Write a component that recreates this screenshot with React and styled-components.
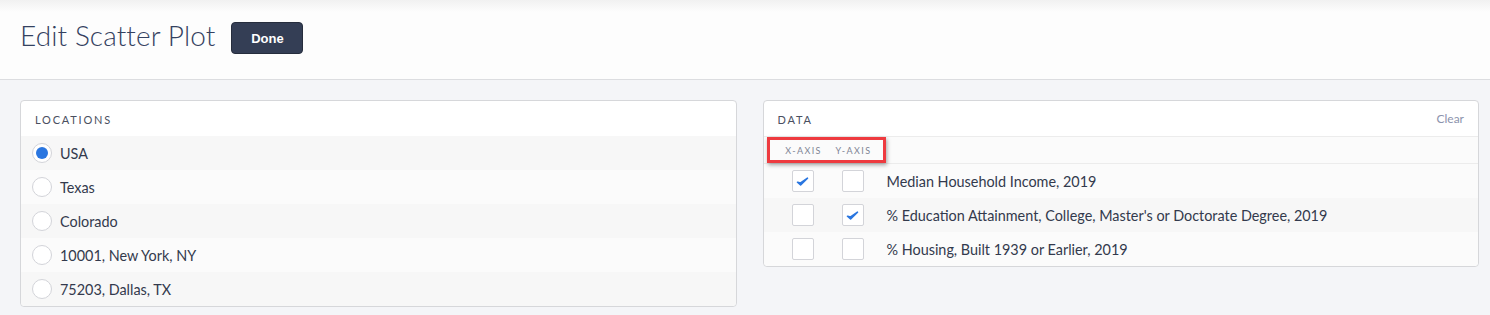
import React from "react";
import styled, { createGlobalStyle } from "styled-components";

const GlobalStyle = createGlobalStyle`
  html, body {
    margin: 0;
    padding: 0;
    background: #f4f5f8;
    font-family: Lato, "Noto Sans", sans-serif;
    color: #3a4256;
  }
`;

const Page = styled.div`
  width: 1490px;
  height: 315px;
  overflow: hidden;
`;

const Header = styled.header`
  height: 80px;
  box-sizing: border-box;
  border-bottom: 1px solid #dcdde0;
  background: linear-gradient(#f1f1f1 0px, #fdfdfd 12px, #fdfdfd 100%);
  display: flex;
  align-items: center;
  padding: 0 0 4px 20px;
  gap: 16px;
`;

const Title = styled.h1`
  margin: 0 0 5px 0;
  font-size: 28px;
  font-weight: 300;
  color: #344160;
  letter-spacing: 0.1px;
`;

const DoneButton = styled.button`
  font-family: "Liberation Sans", Arial, sans-serif;
  font-weight: bold;
  font-size: 13px;
  color: #fff;
  background: #343e55;
  border: 1px solid #262d3d;
  border-radius: 4px;
  width: 72px;
  height: 32px;
  padding: 0;
  margin-top: 1px;
`;

const Body = styled.main`
  display: flex;
  align-items: flex-start;
  gap: 26px;
  padding: 20px 11px 0 20px;
`;

const Panel = styled.section`
  flex: 1;
  background: #fff;
  border: 1px solid #d6d7da;
  border-radius: 4px;
  position: relative;
`;

const PanelHead = styled.div`
  height: 35px;
  display: flex;
  align-items: center;
  justify-content: space-between;
  padding: 0 14px;
  border-bottom: ${(p) => (p.$line ? "1px solid #ececec" : "none")};
`;

const PanelTitle = styled.span`
  font-size: 11px;
  letter-spacing: 1.8px;
  color: #4a4f60;
  padding-top: 1px;
`;

const ClearLink = styled.span`
  font-size: 12px;
  color: #8c93ad;
`;

const Row = styled.div`
  height: 34px;
  display: flex;
  align-items: center;
  padding-left: 11px;
  background: ${(p) => (p.$shade ? "#f7f7f7" : "#fbfbfb")};
  font-size: 14.4px;
  color: #333a4d;
  border-radius: ${(p) => (p.$last ? "0 0 4px 4px" : "0")};
`;

const Radio = styled.span`
  width: 20px;
  height: 20px;
  box-sizing: border-box;
  border-radius: 50%;
  border: 1px solid #d3d4d9;
  background: #fff;
  margin-right: 8px;
  display: flex;
  align-items: center;
  justify-content: center;
  &::after {
    content: "";
    display: ${(p) => (p.$on ? "block" : "none")};
    width: 12px;
    height: 12px;
    border-radius: 50%;
    background: #2a76e0;
  }
`;

const AxisRow = styled.div`
  height: 26px;
  display: flex;
  align-items: center;
  background: #fbfbfb;
  border-bottom: 1px solid #ececec;
  position: relative;
`;

const AxisLabel = styled.span`
  font-size: 9px;
  letter-spacing: 1.4px;
  color: #7d8494;
  width: 50px;
  text-align: center;
  &:first-child {
    margin-left: 15px;
  }
`;

const Highlight = styled.div`
  position: absolute;
  left: 3px;
  top: 0;
  width: 119px;
  height: 26px;
  box-sizing: border-box;
  border: 3px solid #ee3a3f;
  box-shadow: 1px 2px 4px rgba(0, 0, 0, 0.35);
  pointer-events: none;
`;

const DataRow = styled(Row)`
  padding-left: 28px;
`;

const Box = styled.span`
  width: 22px;
  height: 22px;
  box-sizing: border-box;
  border: 1px solid #d3d4d9;
  border-radius: 2px;
  background: #fff;
  margin-right: 28px;
  display: flex;
  align-items: center;
  justify-content: center;
  &:nth-of-type(2) {
    margin-right: 23px;
  }
`;

const Check = () => (
  <svg width="13" height="11" viewBox="0 0 13 11">
    <path d="M1.5 6.2 L4.6 9 L11.5 2.2 L4.6 7 Z" fill="#2a76e0" stroke="#2a76e0" strokeWidth="1.6" strokeLinejoin="round" />
  </svg>
);

const locations = ["USA", "Texas", "Colorado", "10001, New York, NY", "75203, Dallas, TX"];

const data = [
  { label: "Median Household Income, 2019", x: true, y: false },
  { label: "% Education Attainment, College, Master's or Doctorate Degree, 2019", x: false, y: true },
  { label: "% Housing, Built 1939 or Earlier, 2019", x: false, y: false },
];

export default function App() {
  return (
    <Page>
      <GlobalStyle />
      <Header>
        <Title>Edit Scatter Plot</Title>
        <DoneButton>Done</DoneButton>
      </Header>
      <Body>
        <Panel>
          <PanelHead>
            <PanelTitle>LOCATIONS</PanelTitle>
          </PanelHead>
          {locations.map((loc, i) => (
            <Row key={loc} $shade={i % 2 === 0} $last={i === locations.length - 1}>
              <Radio $on={i === 0} />
              {loc}
            </Row>
          ))}
        </Panel>
        <Panel>
          <PanelHead $line>
            <PanelTitle>DATA</PanelTitle>
            <ClearLink>Clear</ClearLink>
          </PanelHead>
          <AxisRow>
            <AxisLabel>X-AXIS</AxisLabel>
            <AxisLabel>Y-AXIS</AxisLabel>
            <Highlight />
          </AxisRow>
          {data.map((d, i) => (
            <DataRow key={d.label} $shade={i % 2 === 1} $last={i === data.length - 1}>
              <Box>{d.x && <Check />}</Box>
              <Box>{d.y && <Check />}</Box>
              {d.label}
            </DataRow>
          ))}
        </Panel>
      </Body>
    </Page>
  );
}
